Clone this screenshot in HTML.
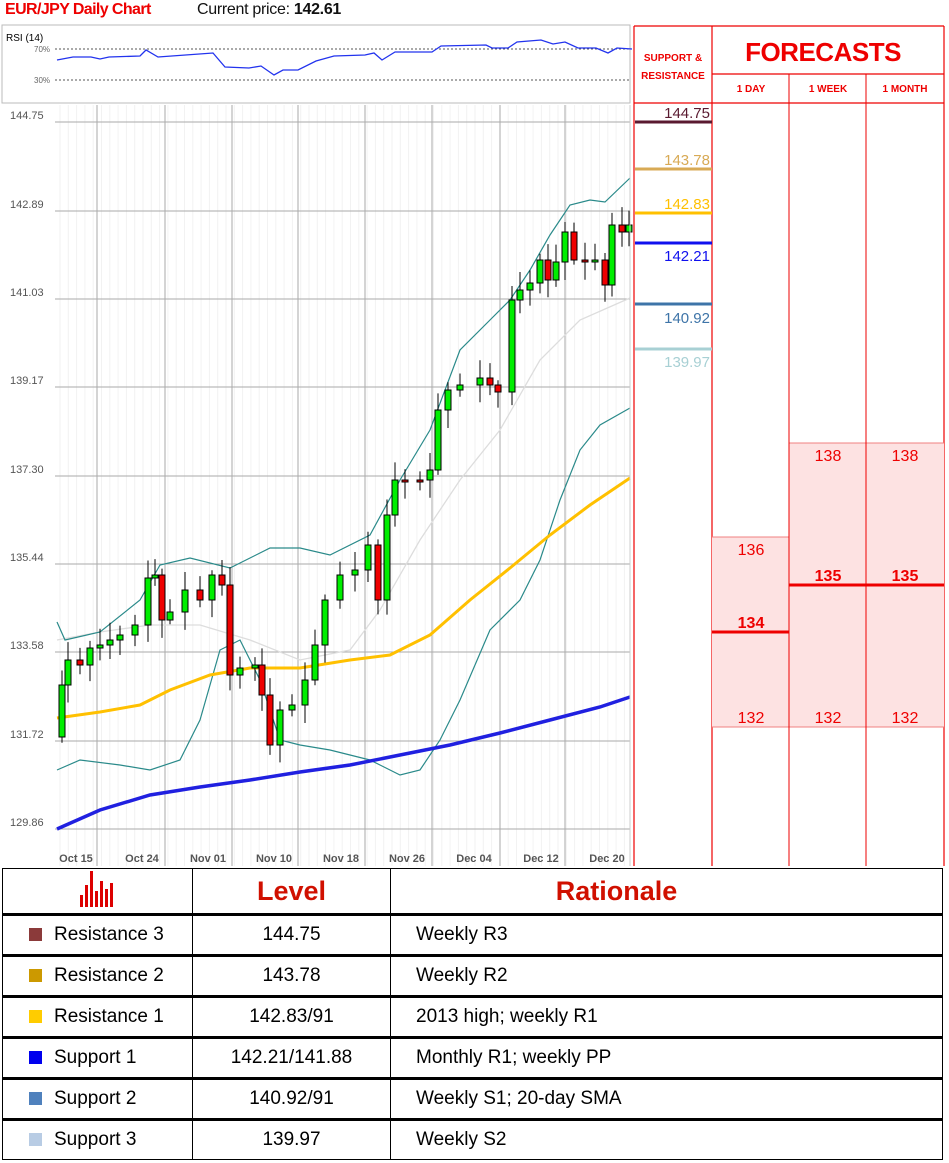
<!DOCTYPE html>
<html><head><meta charset="utf-8"><style>
body{margin:0;width:949px;height:1163px;background:#fff;position:relative;overflow:hidden;font-family:"Liberation Sans",sans-serif}
.t{position:absolute;white-space:nowrap}
table{border-collapse:collapse;position:absolute;left:2px;top:868px;width:941px}
td{border:1px solid #000;height:38px;font-size:19px;padding:0}
tr.r td{border-bottom:3px solid #000}
.sw{display:inline-block;width:13px;height:13px;margin:0 12px 0 26px;vertical-align:-1px}
</style></head><body>
<div class="t" style="left:5px;top:1px;font-size:16px;color:#e00;font-weight:bold;letter-spacing:-0.6px">EUR/JPY Daily Chart</div>
<div class="t" style="left:197px;top:1px;font-size:16px;color:#111;letter-spacing:-0.3px">Current price: <b>142.61</b></div>
<svg id="c" width="949" height="868" style="position:absolute;left:0;top:0" xmlns="http://www.w3.org/2000/svg" font-family="Liberation Sans, sans-serif">
<rect x="2" y="25" width="628" height="78" fill="#fff" stroke="#bbb"/>
<text x="6" y="41" font-size="10" fill="#000">RSI (14)</text>
<text x="34" y="52" font-size="8" fill="#666">70%</text>
<text x="34" y="83" font-size="8" fill="#666">30%</text>
<line x1="55" y1="49" x2="630" y2="49" stroke="#555" stroke-dasharray="2,2"/>
<line x1="55" y1="80" x2="630" y2="80" stroke="#555" stroke-dasharray="2,2"/>
<polyline fill="none" stroke="#2233ee" stroke-width="1.3" points="57,60 73,57 91,57 100,59 109,57 140,56 146,50 158,57 213,53 225,67 249,68 261,66 274,75 283,70 298,70 316,61 334,56 365,55 374,53 382,60 395,52 432,52 441,46 486,45 492,48 508,48 517,42 541,40 553,44 565,42 578,48 596,48 608,53 617,48 632,49"/>
<g id="grid"></g>
<polyline fill="none" stroke="#ddd" stroke-width="1.3" points="57,640 100,632 150,625 200,625 250,640 300,660 350,650 380,610 420,540 460,480 500,430 540,360 580,320 630,298"/>
<polyline fill="none" stroke="#2a8a8a" stroke-width="1.2" points="57,622 65,640 100,632 140,600 160,565 190,558 230,568 270,548 300,548 330,555 370,535 400,480 430,430 460,350 490,320 510,300 530,270 550,235 570,205 590,200 605,202 630,178"/>
<polyline fill="none" stroke="#2a8a8a" stroke-width="1.2" points="57,770 80,760 120,765 150,770 180,760 200,720 220,650 240,640 260,680 280,740 300,745 330,750 370,760 400,775 420,770 440,740 460,700 490,630 520,600 540,560 560,500 580,450 600,425 630,408"/>
<polyline fill="none" stroke="#ffc000" stroke-width="3" points="57,718 100,712 140,705 170,690 210,675 250,668 300,668 350,660 390,655 430,635 470,600 510,568 550,535 590,505 630,478"/>
<polyline fill="none" stroke="#2020e0" stroke-width="3.5" points="57,829 100,810 150,795 200,787 250,780 300,772 350,765 400,755 450,745 500,733 550,720 600,707 630,697"/>
<g id="cd"></g>
<line x1="630" y1="105" x2="630" y2="866" stroke="#ccc"/>
<g stroke="#e00" stroke-width="1.2">
<line x1="634" y1="26" x2="634" y2="866"/>
<line x1="712" y1="26" x2="712" y2="866"/>
<line x1="944" y1="26" x2="944" y2="866"/>
<line x1="634" y1="26" x2="944" y2="26"/>
<line x1="712" y1="74" x2="944" y2="74"/>
<line x1="634" y1="103" x2="944" y2="103"/>
</g>
<rect x="712" y="537" width="77" height="190" fill="#fde2e2"/>
<rect x="789" y="443" width="155" height="284" fill="#fde2e2"/>
<g stroke="#e00" stroke-width="1">
<line x1="712" y1="537" x2="789" y2="537" stroke="#f08080"/>
<line x1="789" y1="443" x2="944" y2="443" stroke="#f08080"/>
<line x1="712" y1="727" x2="944" y2="727" stroke="#f08080"/>
<line x1="789" y1="74" x2="789" y2="866"/>
<line x1="866" y1="74" x2="866" y2="866"/>
<line x1="712" y1="632" x2="789" y2="632" stroke-width="3"/>
<line x1="789" y1="585" x2="944" y2="585" stroke-width="3"/>
</g>
<text x="823" y="61" font-size="26" fill="#e00" text-anchor="middle" font-weight="bold" letter-spacing="-0.5">FORECASTS</text>
<text x="673" y="61" font-size="10" fill="#e00" text-anchor="middle" font-weight="bold">SUPPORT &amp;</text>
<text x="673" y="79" font-size="10" fill="#e00" text-anchor="middle" font-weight="bold">RESISTANCE</text>
<g font-size="10" fill="#e00" text-anchor="middle" font-weight="bold">
<text x="751" y="92">1 DAY</text><text x="828" y="92">1 WEEK</text><text x="905" y="92">1 MONTH</text></g>
<g font-size="15" text-anchor="end">
<text x="710" y="118" fill="#5a1a30">144.75</text>
<text x="710" y="165" fill="#d8aa55">143.78</text>
<text x="710" y="209" fill="#ffc000">142.83</text>
<text x="710" y="261" fill="#1010ee">142.21</text>
<text x="710" y="323" fill="#3e74a8">140.92</text>
<text x="710" y="367" fill="#a8d0d4">139.97</text>
</g>
<line x1="635" y1="122" x2="712" y2="122" stroke="#5a1a30" stroke-width="3"/>
<line x1="635" y1="169" x2="712" y2="169" stroke="#d8aa55" stroke-width="3"/>
<line x1="635" y1="213" x2="712" y2="213" stroke="#ffc000" stroke-width="3"/>
<line x1="635" y1="243" x2="712" y2="243" stroke="#1010ee" stroke-width="3"/>
<line x1="635" y1="304" x2="712" y2="304" stroke="#3e74a8" stroke-width="3"/>
<line x1="635" y1="349" x2="712" y2="349" stroke="#a8d0d4" stroke-width="3"/>
<g font-size="16" fill="#e00" text-anchor="middle">
<text x="751" y="555">136</text><text x="751" y="628" font-weight="bold">134</text><text x="751" y="723">132</text>
<text x="828" y="461">138</text><text x="828" y="581" font-weight="bold">135</text><text x="828" y="723">132</text>
<text x="905" y="461">138</text><text x="905" y="581" font-weight="bold">135</text><text x="905" y="723">132</text>
</g>
</svg>
<table>
<tr class="r"><td style="width:189px;height:43px;text-align:center"><svg width="40" height="38" viewBox="0 0 40 38"><g fill="#d00"><rect x="2" y="26" width="3" height="12"/><rect x="7" y="16" width="3" height="22"/><rect x="12" y="2" width="3" height="36"/><rect x="17" y="22" width="3" height="16"/><rect x="22" y="12" width="3" height="26"/><rect x="27" y="20" width="3" height="18"/><rect x="32" y="14" width="3" height="24"/></g></svg></td>
<td style="width:197px;text-align:center;font-size:27px;font-weight:bold;color:#d01000">Level</td>
<td style="text-align:center;font-size:27px;font-weight:bold;color:#d01000;padding-right:100px">Rationale</td></tr>
<tr class="r"><td><span class="sw" style="background:#8b3a3a"></span>Resistance 3</td><td style="text-align:center">144.75</td><td style="padding-left:25px">Weekly R3</td></tr>
<tr class="r"><td><span class="sw" style="background:#cc9900"></span>Resistance 2</td><td style="text-align:center">143.78</td><td style="padding-left:25px">Weekly R2</td></tr>
<tr class="r"><td><span class="sw" style="background:#ffcc00"></span>Resistance 1</td><td style="text-align:center">142.83/91</td><td style="padding-left:25px">2013 high; weekly R1</td></tr>
<tr class="r"><td><span class="sw" style="background:#0000ee"></span>Support 1</td><td style="text-align:center">142.21/141.88</td><td style="padding-left:25px">Monthly R1; weekly PP</td></tr>
<tr class="r"><td><span class="sw" style="background:#4f81bd"></span>Support 2</td><td style="text-align:center">140.92/91</td><td style="padding-left:25px">Weekly S1; 20-day SMA</td></tr>
<tr><td><span class="sw" style="background:#b8cce4"></span>Support 3</td><td style="text-align:center">139.97</td><td style="padding-left:25px">Weekly S2</td></tr>
</table>
<script>
(function(){
var NS="http://www.w3.org/2000/svg";
function el(p,n,a){var e=document.createElementNS(NS,n);for(var k in a)e.setAttribute(k,a[k]);p.appendChild(e);return e;}
var g=document.getElementById('grid');
var hy=[122,211,299,387,476,564,652,741,829],hl=["144.75","142.89","141.03","139.17","137.30","135.44","133.58","131.72","129.86"];
for(var x=60;x<630;x+=8.3)el(g,'line',{x1:x,y1:105,x2:x,y2:866,stroke:'#f2f2f2'});
for(var i=0;i<9;i++){el(g,'line',{x1:55,y1:hy[i],x2:630,y2:hy[i],stroke:'#aaa'});var t=el(g,'text',{x:10,y:hy[i]-3,'font-size':11,fill:'#555'});t.textContent=hl[i];}
var vx=[97,165,232,298,365,432,500,565],vl=["Oct 15","Oct 24","Nov 01","Nov 10","Nov 18","Nov 26","Dec 04","Dec 12","Dec 20"];
for(var i=0;i<8;i++)el(g,'line',{x1:vx[i],y1:105,x2:vx[i],y2:866,stroke:'#aaa'});
var lx=[76,142,208,274,341,407,474,541,607];
for(var i=0;i<9;i++){var t=el(g,'text',{x:lx[i],y:862,'font-size':11,fill:'#555','text-anchor':'middle','font-weight':'bold'});t.textContent=vl[i];}
var kp=[[55,737],[62,685],[68,660],[80,665],[90,648],[100,645],[110,640],[120,635],[135,625],[148,578],[155,575],[162,620],[170,612],[185,590],[200,600],[212,575],[222,585],[230,675],[240,668],[255,665],[262,695],[270,745],[280,710],[292,705],[305,680],[315,645],[325,600],[340,575],[355,570],[368,545],[378,600],[387,515],[395,480],[405,480],[420,480],[430,470],[438,410],[448,390],[460,385],[480,378],[490,385],[498,392],[512,300],[520,290],[530,283],[540,260],[548,280],[556,262],[565,232],[574,260],[585,262],[595,260],[605,285],[612,225],[622,232],[629,225]];
var cd=document.getElementById('cd');
for(var i=1;i<kp.length;i++){var o=kp[i-1][1],c=kp[i][1],x=kp[i][0];var tp=Math.min(o,c),h=Math.max(Math.abs(o-c),2);
var w1=4+Math.abs(Math.sin(i*2.3))*14,w2=4+Math.abs(Math.cos(i*1.7))*14;
el(cd,'line',{x1:x,y1:tp-w1,x2:x,y2:tp+h+w2,stroke:'#000'});
el(cd,'rect',{x:x-3,y:tp,width:6,height:h,fill:c<o?'#00ee00':'#ee0000',stroke:'#000','stroke-width':1});}
})();
</script>
</body></html>
